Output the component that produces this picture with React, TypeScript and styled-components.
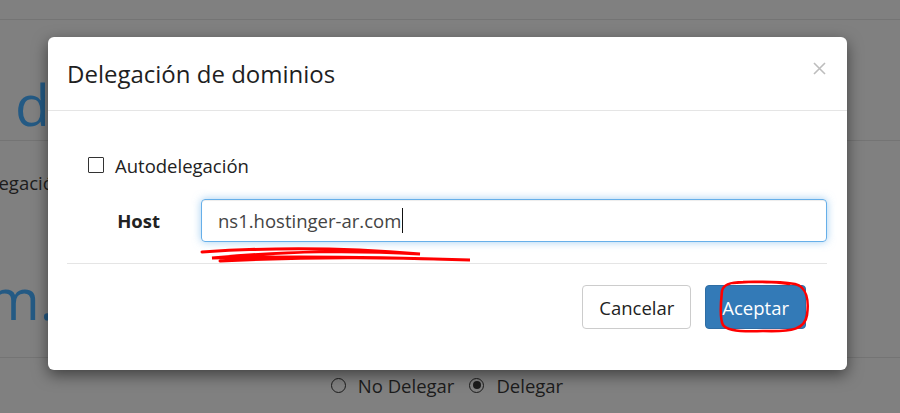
import styled, { createGlobalStyle } from 'styled-components';

const Global = createGlobalStyle`
  html, body { margin: 0; padding: 0; }
  body {
    font-family: "Open Sans", "Noto Sans", sans-serif;
    color: #333;
  }
`;

const Page = styled.div`
  position: relative;
  width: 900px;
  height: 413px;
  overflow: hidden;
  background: #808080;
  color: #1c1c1c;
`;

const TopBar = styled.div`
  height: 19px;
  border-bottom: 1px solid #747474;
`;

const BigHeading = styled.div<{ $indent: number; $top: number; $height: number }>`
  height: ${(p) => p.$height}px;
  padding-top: ${(p) => p.$top}px;
  text-indent: ${(p) => p.$indent}px;
  box-sizing: border-box;
  font-size: 57px;
  line-height: 1;
  color: #245a84;
  white-space: nowrap;
`;

const Rule = styled.div`
  border-top: 1px solid #747474;
`;

const PageText = styled.div`
  margin: 30px 0 0 -30px;
  font-size: 18.5px;
  line-height: 24px;
  height: 24px;
  white-space: nowrap;
`;

const RadioRow = styled.div`
  display: flex;
  align-items: center;
  justify-content: center;
  height: 54px;
  padding-right: 6px;
  font-size: 18.5px;
  color: #1c1c1c;
`;

const RadioItem = styled.span`
  display: inline-flex;
  align-items: center;
  gap: 12px;
  & + & {
    margin-left: 15px;
  }
`;

const Radio = styled.span<{ $on?: boolean }>`
  width: 15px;
  height: 15px;
  border: 1.5px solid #1c1c1c;
  border-radius: 50%;
  box-sizing: border-box;
  display: inline-flex;
  align-items: center;
  justify-content: center;
  &::after {
    content: '';
    width: 8px;
    height: 8px;
    border-radius: 50%;
    background: ${(p) => (p.$on ? '#1c1c1c' : 'transparent')};
  }
`;

const Modal = styled.div`
  position: absolute;
  left: 48px;
  top: 37px;
  width: 799px;
  height: 333px;
  background: #fff;
  border-radius: 6px;
  box-shadow: 0 5px 15px rgba(0, 0, 0, 0.5);
  display: flex;
  flex-direction: column;
`;

const Header = styled.div`
  height: 74px;
  padding: 0 21px 0 19px;
  border-bottom: 1px solid #e5e5e5;
  display: flex;
  align-items: center;
  justify-content: space-between;
  box-sizing: border-box;
`;

const Title = styled.h4`
  margin: 0;
  font-size: 24px;
  font-weight: 400;
  color: #1f1f1f;
`;

const Close = styled.button`
  border: 0;
  background: none;
  padding: 0;
  width: 14px;
  height: 14px;
  margin-top: -10px;
  cursor: pointer;
`;

const Body = styled.div`
  padding: 0 20px 0 19px;
  position: relative;
`;

const CheckRow = styled.label`
  display: flex;
  align-items: center;
  gap: 11px;
  margin: 41px 0 0 21px;
  font-size: 18.5px;
  height: 26px;
  color: #222;
`;

const Box = styled.span`
  width: 16px;
  height: 16px;
  border: 1.5px solid #333;
  box-sizing: border-box;
  border-radius: 1px;
`;

const FieldRow = styled.div`
  display: grid;
  grid-template-columns: 93px 1fr;
  gap: 41px;
  align-items: center;
  margin-top: 21px;
`;

const Label = styled.label`
  text-align: right;
  font-size: 18.5px;
  font-weight: 700;
  color: #222;
`;

const InputBox = styled.div`
  height: 43px;
  box-sizing: border-box;
  border: 1px solid #66afe9;
  border-radius: 4px;
  box-shadow: inset 0 1px 1px rgba(0, 0, 0, 0.075), 0 0 8px rgba(102, 175, 233, 0.6);
  padding: 0 16px;
  display: flex;
  align-items: center;
  font-size: 18.5px;
  color: #444;
`;

const Caret = styled.span`
  display: inline-block;
  width: 1px;
  height: 25px;
  background: #111;
  margin-left: 1px;
`;

const Divider = styled.div`
  margin-top: 21px;
  border-top: 1px solid #e5e5e5;
`;

const Scribble = styled.svg`
  position: absolute;
  left: 152px;
  top: 137px;
  overflow: visible;
`;

const Footer = styled.div`
  display: flex;
  justify-content: flex-end;
  gap: 14px;
  padding: 21px 41px 0 0;
  position: relative;
`;

const Button = styled.button<{ $primary?: boolean }>`
  height: 44px;
  padding: 0 16px;
  font-family: inherit;
  font-size: 18.5px;
  border-radius: 4px;
  border: 1px solid ${(p) => (p.$primary ? '#2e6da4' : '#ccc')};
  background: ${(p) => (p.$primary ? '#337ab7' : '#fff')};
  color: ${(p) => (p.$primary ? '#fff' : '#222')};
  cursor: pointer;
`;

const Circle = styled.svg`
  position: absolute;
  right: 38px;
  top: 17px;
  overflow: visible;
`;

export default function App() {
  return (
    <>
      <Global />
      <Page>
        <TopBar />
        <BigHeading $indent={15} $top={56} $height={120}>d</BigHeading>
        <Rule />
        <PageText>Delegación</PageText>
        <BigHeading $indent={-13} $top={75} $height={162}>m.</BigHeading>
        <Rule />
        <RadioRow>
          <RadioItem>
            <Radio /> No Delegar
          </RadioItem>
          <RadioItem>
            <Radio $on /> Delegar
          </RadioItem>
        </RadioRow>

        <Modal>
          <Header>
            <Title>Delegación de dominios</Title>
            <Close aria-label="Cerrar">
              <svg width="13" height="13" viewBox="0 0 13 13">
                <path d="M1 1L12 12M12 1L1 12" stroke="#bdbdbd" strokeWidth="1.6" />
              </svg>
            </Close>
          </Header>
          <Body>
            <CheckRow>
              <Box />
              Autodelegación
            </CheckRow>
            <FieldRow>
              <Label>Host</Label>
              <InputBox>
                ns1.hostinger-ar.com
                <Caret />
              </InputBox>
            </FieldRow>
            <Divider />
            <Scribble width="272" height="16" viewBox="0 0 272 16">
              <path
                d="M2 4 C60 0, 140 -1, 220 6 C150 2, 90 3, 12 10 C90 8, 180 9, 270 12 C200 10, 120 8, 20 13"
                fill="none"
                stroke="#ff0000"
                strokeWidth="3"
                strokeLinecap="round"
              />
            </Scribble>
          </Body>
          <Footer>
            <Button>Cancelar</Button>
            <Button $primary>Aceptar</Button>
            <Circle width="96" height="52" viewBox="0 0 96 52">
              <path
                d="M20 2 C45 0, 70 1, 82 3 C94 6, 96 20, 94 34 C92 48, 80 51, 50 50 C30 51, 14 50, 10 44 C6 36, 8 20, 9 10 C10 4, 16 1, 30 1 C50 0, 70 2, 76 3"
                fill="none"
                stroke="#ff0000"
                strokeWidth="2.6"
                strokeLinecap="round"
              />
            </Circle>
          </Footer>
        </Modal>
      </Page>
    </>
  );
}
